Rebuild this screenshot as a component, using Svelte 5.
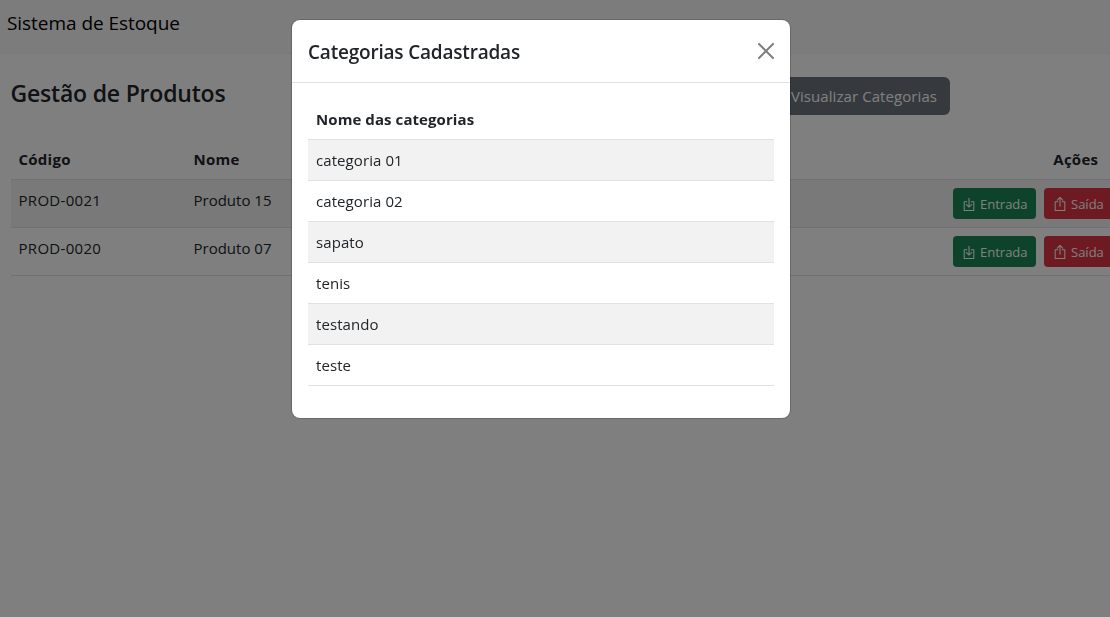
<script>
  const products = [
    { code: 'PROD-0021', name: 'Produto 15' },
    { code: 'PROD-0020', name: 'Produto 07' }
  ];
  const categories = ['categoria 01', 'categoria 02', 'sapato', 'tenis', 'testando', 'teste'];
</script>

<div class="page">
  <nav class="navbar"><span class="brand">Sistema de Estoque</span></nav>
  <main>
    <header class="heading">
      <h2>Gestão de Produtos</h2>
      <button class="btn secondary">Visualizar Categorias</button>
    </header>
    <div class="table products">
      <div class="row head">
        <div class="cell">Código</div>
        <div class="cell">Nome</div>
        <div class="cell"></div>
        <div class="cell center">Ações</div>
      </div>
      {#each products as p}
        <div class="row">
          <div class="cell code">{p.code}</div>
          <div class="cell">{p.name}</div>
          <div class="cell"></div>
          <div class="cell actions">
            <button class="btn small success">
              <svg viewBox="0 0 16 16" width="14" height="14"><path d="M5.500 5.500H2.500V15.500H13.500V5.500H10.500" /><path d="M8 1.500V11.300M4.900 8.400L8 11.500L11.100 8.400" /></svg>
              <span>Entrada</span>
            </button>
            <button class="btn small danger">
              <svg viewBox="0 0 16 16" width="14" height="14"><path d="M5.500 5.500H2.500V15.500H13.500V5.500H10.500" /><path d="M8 10.500V.700M4.900 3.600L8 .500L11.100 3.600" /></svg>
              <span>Saída</span>
            </button>
          </div>
        </div>
      {/each}
    </div>
  </main>
</div>

<div class="backdrop">
  <div class="modal" role="dialog" aria-modal="true">
    <div class="modal-header">
      <h5>Categorias Cadastradas</h5>
      <svg class="close" viewBox="0 0 16 16" width="16" height="16"><path d="M.293.293a1 1 0 0 1 1.414 0L8 6.586 14.293.293a1 1 0 1 1 1.414 1.414L9.414 8l6.293 6.293a1 1 0 0 1-1.414 1.414L8 9.414l-6.293 6.293a1 1 0 0 1-1.414-1.414L6.586 8 .293 1.707a1 1 0 0 1 0-1.414z" /></svg>
    </div>
    <div class="modal-body">
      <div class="table">
        <div class="row head"><div class="cell">Nome das categorias</div></div>
        {#each categories as c}
          <div class="row"><div class="cell">{c}</div></div>
        {/each}
      </div>
    </div>
  </div>
</div>

<style>
  :global(body) { overflow: hidden; background: #fff; }
  .page, .backdrop {
    box-sizing: border-box;
    font-family: "Open Sans", "Noto Sans", sans-serif;
    font-size: 15px;
    line-height: 24px;
    color: #212529;
  }
  .page { width: 1110px; height: 617px; overflow: hidden; }
  .navbar {
    box-sizing: border-box;
    height: 54px;
    padding: 8px 7px;
    background: #f8f9fa;
    border-bottom: 1px solid #f1f2f3;
    color: #000;
  }
  .brand { font-size: 19px; line-height: 30px; letter-spacing: -0.05px; }
  main { padding: 23px 0 0 11px; }
  .heading {
    display: flex;
    justify-content: space-between;
    width: 939px;
    height: 62px;
  }
  h2 { margin: 0 0 0 -0.5px; font-size: 23px; font-weight: 600; line-height: 33px; letter-spacing: -0.2px; white-space: nowrap; }
  .btn {
    box-sizing: border-box;
    display: flex;
    align-items: center;
    justify-content: center;
    border: 0;
    border-radius: 6px;
    font: inherit;
    color: #fff;
    white-space: nowrap;
  }
  .secondary { width: 172px; height: 38px; padding: 0; letter-spacing: 0.08px; background: #6c757d; }
  .small { height: 31px; padding: 0 0 0 9px; border-radius: 4px; font-size: 13px; gap: 4px; flex: none; justify-content: flex-start; }
  .small svg { display: block; fill: none; stroke: currentColor; stroke-width: 1.2; stroke-linejoin: round; stroke-linecap: round; }
  .success { width: 83px; background: #198754; }
  .danger { width: 70px; background: #dc3545; }
  .products { width: 1196px; }
  .row { display: flex; border-bottom: 1px solid #dee2e6; }
  .products .row { display: grid; grid-template-columns: 175px 175px 584px 262px; }
  .products .cell { padding-left: 7.500px; }
  .products .actions { padding-left: 8px; }
  .row:nth-child(even) { background: #f2f2f2; }
  .head { font-weight: 700; letter-spacing: 0.08px; }
  .products .head { letter-spacing: 0.25px; }
  .cell { padding: 8px; white-space: nowrap; }
  .code { letter-spacing: 0.3px; }
  .center { text-align: center; }
  .actions { display: flex; gap: 8px; }
  .backdrop {
    position: fixed;
    inset: 0;
    display: flex;
    justify-content: center;
    align-items: flex-start;
    padding: 20px 28px 0 0;
    background: rgba(0, 0, 0, 0.5);
  }
  .modal {
    box-sizing: border-box;
    width: 498px;
    height: 398px;
    background: #fff;
    border-radius: 8px;
    box-shadow: 0 0 0 1px rgba(0, 0, 0, 0.175);
  }
  .modal-header {
    box-sizing: border-box;
    display: flex;
    align-items: center;
    justify-content: space-between;
    height: 63px;
    padding: 0 16px;
    border-bottom: 1px solid #dee2e6;
  }
  h5 { margin: 1px 0 0; font-size: 19px; font-weight: 600; line-height: 30px; letter-spacing: -0.2px; }
  .close { fill: #000; opacity: 0.5; }
  .modal-body { padding: 16px; }
  .modal-body .row:not(.head) { letter-spacing: 0.08px; }
</style>
